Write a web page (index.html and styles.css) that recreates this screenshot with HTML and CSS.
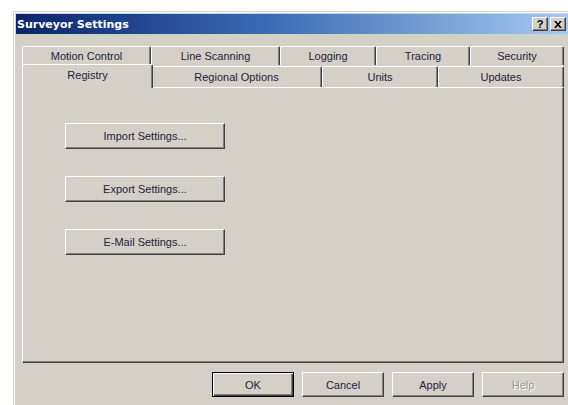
FILE: index.html
```html
<!DOCTYPE html>
<html lang="en">
<head>
<meta charset="utf-8">
<title>Surveyor Settings</title>
<link rel="stylesheet" href="styles.css">
</head>
<body>
<div class="window">
  <div class="titlebar">
    <span class="title">Surveyor Settings</span>
    <div class="caption-btns">
      <span class="cbtn">?</span>
      <span class="cbtn cbtn-close">
        <svg width="8" height="7" viewBox="0 0 8 7"><path d="M0 0h2l2 2.2L6 0h2L5 3.5 8 7H6L4 4.8 2 7H0l3-3.5z" fill="#000"/></svg>
      </span>
    </div>
  </div>
  <div class="content">
    <div class="tabs">
      <div class="tab-row row-back">
        <div class="tab">Motion Control</div>
        <div class="tab">Line Scanning</div>
        <div class="tab">Logging</div>
        <div class="tab">Tracing</div>
        <div class="tab">Security</div>
      </div>
      <div class="tab-row row-front">
        <div class="tab tab-active">Registry</div>
        <div class="tab">Regional Options</div>
        <div class="tab">Units</div>
        <div class="tab">Updates</div>
      </div>
    </div>
    <div class="panel">
      <div class="panel-actions">
        <button class="btn btn-wide">Import Settings...</button>
        <button class="btn btn-wide">Export Settings...</button>
        <button class="btn btn-wide">E-Mail Settings...</button>
      </div>
    </div>
    <div class="footer">
      <button class="btn btn-dialog btn-default">OK</button>
      <button class="btn btn-dialog">Cancel</button>
      <button class="btn btn-dialog">Apply</button>
      <button class="btn btn-dialog btn-disabled">Help</button>
    </div>
  </div>
</div>
</body>
</html>
```

FILE: styles.css
```css
html, body {
  margin: 0;
  padding: 0;
}

body {
  background: #fff;
  width: 568px;
  height: 405px;
  overflow: hidden;
  font-family: "Liberation Sans", Arial, sans-serif;
  font-size: 11px;
  color: #22223a;
}

/* classic dialog frame */
.window {
  margin: 11px 0 0 13px;
  width: 558px;
  height: 400px;
  box-sizing: border-box;
  padding: 3px 3px 0 3px;
  background: #d4d0c8;
  box-shadow: inset 1px 1px 0 #d4d0c8, inset 2px 2px 0 #fff;
}

.titlebar {
  height: 20px;
  display: flex;
  align-items: center;
  background: linear-gradient(to right, #0a246a 0%, #3a6ab4 45%, #a6caf0 100%);
  padding: 0 2px 0 1px;
}

.title {
  color: #fff;
  font-family: "DejaVu Sans", Verdana, sans-serif;
  font-weight: bold;
  font-size: 11px;
  letter-spacing: 0;
}

.caption-btns {
  margin-left: auto;
  display: flex;
  gap: 2px;
}

.cbtn {
  width: 16px;
  height: 14px;
  box-sizing: border-box;
  background: #d4d0c8;
  border: 1px solid;
  border-color: #fff #404040 #404040 #fff;
  box-shadow: inset -1px -1px 0 #808080;
  display: flex;
  align-items: center;
  justify-content: center;
  font-family: "Liberation Sans", Arial, sans-serif;
  font-weight: bold;
  font-size: 11px;
  line-height: 1;
  color: #000;
}

.content {
  padding: 12px 4px 0 6px;
}

/* two rows of property-sheet tabs */
.tab-row {
  display: grid;
}

.row-back {
  grid-template-columns: 129px 129px 96px 94px 94px;
  height: 19px;
}

.row-front {
  grid-template-columns: 129px 171px 116px 126px;
  height: 21px;
  margin-top: 1px;
}

.tab {
  box-sizing: border-box;
  background: #d4d0c8;
  border-top: 1px solid #fff;
  border-left: 1px solid #fff;
  border-right: 1px solid #404040;
  box-shadow: inset -1px 0 0 #808080;
  border-radius: 2px 2px 0 0;
  display: flex;
  align-items: center;
  justify-content: center;
  white-space: nowrap;
}

.tab-active {
  position: relative;
  z-index: 1;
  margin: -2px -2px -1px 0;
  padding-bottom: 3px;
}

.panel {
  height: 276px;
  box-sizing: border-box;
  border: 1px solid;
  border-color: #fff #404040 #404040 #fff;
  box-shadow: inset -1px -1px 0 #808080;
  padding: 35px 0 0 42px;
}

.panel-actions {
  display: flex;
  flex-direction: column;
  gap: 27px;
}

.btn {
  box-sizing: border-box;
  background: #d4d0c8;
  border: 1px solid;
  border-color: #fff #404040 #404040 #fff;
  box-shadow: inset -1px -1px 0 #808080;
  font-family: inherit;
  font-size: 11px;
  color: #22223a;
  padding: 0;
  margin: 0;
  display: flex;
  align-items: center;
  justify-content: center;
}

.btn-wide {
  width: 160px;
  height: 26px;
}

.footer {
  margin-top: 9px;
  display: flex;
  justify-content: flex-end;
  gap: 8px;
  padding-right: 0;
}

.btn-dialog {
  width: 82px;
  height: 25px;
}

.btn-default {
  border-color: #000;
  box-shadow: inset 1px 1px 0 #fff, inset -1px -1px 0 #404040, inset -2px -2px 0 #808080;
}

.btn-disabled {
  color: #9a9a9a;
  text-shadow: 1px 1px 0 #fff;
}
```
